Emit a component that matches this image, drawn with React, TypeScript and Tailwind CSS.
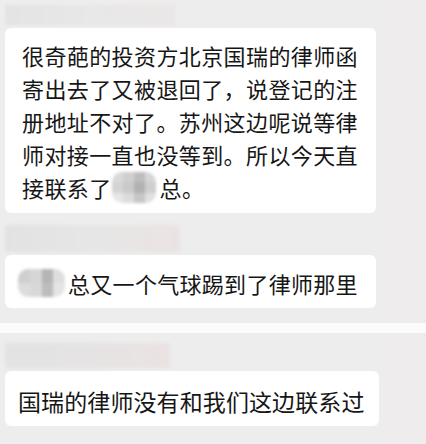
import React from "react";

const font = { fontFamily: '"Noto Sans CJK SC", "Noto Sans", sans-serif' };

function Mosaic({ w, h, cells }: { w: number; h: number; cells: string[][] }) {
  return (
    <span
      className="inline-flex flex-col overflow-hidden rounded-[10px] align-middle blur-[1.5px]"
      style={{ width: w, height: h }}
    >
      {cells.map((row, i) => (
        <span key={i} className="flex flex-1">
          {row.map((c, j) => (
            <span key={j} className="flex-1" style={{ background: c }} />
          ))}
        </span>
      ))}
    </span>
  );
}

export default function App() {
  return (
    <div
      className="relative flex h-[444px] w-[426px] flex-col overflow-hidden bg-[#ededed] text-[#161616]"
      style={font}
    >
      <div className="absolute right-0 top-0 h-full w-[48px] bg-[#efeced]" />
      {/* block 1 */}
      <div className="relative flex flex-col pt-[5px]">
        <div className="ml-[5px] h-[20px] w-[170px] rounded-[2px] bg-gradient-to-r from-[#e4e4e4] via-[#e8e8e8] to-[#ebe7e7] blur-[1px]" />
        <div className="ml-[5px] mt-[3px] w-[371px] rounded-[6px] bg-white pb-[9px] pl-[17px] pr-[12px] pt-[11px] text-[22px] leading-[33px] tracking-[0.4px]">
          <div>很奇葩的投资方北京国瑞的律师函</div>
          <div>寄出去了又被退回了，说登记的注</div>
          <div>册地址不对了。苏州这边呢说等律</div>
          <div>师对接一直也没等到。所以今天直</div>
          <div className="flex items-center">
            <span>接联系了</span>
            <Mosaic
              w={44}
              h={31}
              cells={[
                ["#d9d9d9", "#cfcfcf", "#bdbdbd", "#d6d6d6"],
                ["#d4d4d4", "#c9c9c9", "#b2b2b2", "#cfcfcf"],
                ["#e6e6e6", "#dcdcdc", "#c6c6c6", "#e0e0e0"],
              ]}
            />
            <span className="ml-[4px]">总。</span>
          </div>
        </div>
      </div>
      {/* block 2 */}
      <div className="relative mt-[12px] flex flex-col">
        <div className="ml-[5px] h-[27px] w-[175px] rounded-[2px] bg-gradient-to-r from-[#e2e2e2] via-[#e6e6e6] to-[#ebe3e3] blur-[1.5px]" />
        <div className="ml-[5px] mt-[3px] flex h-[53px] w-[371px] items-center rounded-[6px] bg-white pl-[13px] pt-[3px] text-[22px] tracking-[0.3px]">
          <Mosaic
            w={47}
            h={28}
            cells={[
              ["#cfcfcf", "#d6d6d6", "#b5b5b5", "#dedede"],
              ["#dcdcdc", "#d8d8d8", "#bcbcbc", "#e4e4e4"],
            ]}
          />
          <span className="ml-[3px]">总又一个气球踢到了律师那里</span>
        </div>
      </div>
      <div className="relative mt-[15px] h-[10px] w-full bg-[#fbfbfb]" />
      {/* block 3 */}
      <div className="relative mt-[10px] flex flex-col">
        <div className="ml-[5px] h-[25px] w-[165px] rounded-[2px] bg-gradient-to-r from-[#e3e3e3] via-[#e5e3e3] to-[#ebe2e2] blur-[1.5px]" />
        <div className="ml-[5px] mt-[3px] flex h-[55px] w-[374px] items-center rounded-[6px] bg-white pl-[13px] pt-[5px] text-[23px] tracking-[0.1px]">
          国瑞的律师没有和我们这边联系过
        </div>
      </div>
    </div>
  );
}
